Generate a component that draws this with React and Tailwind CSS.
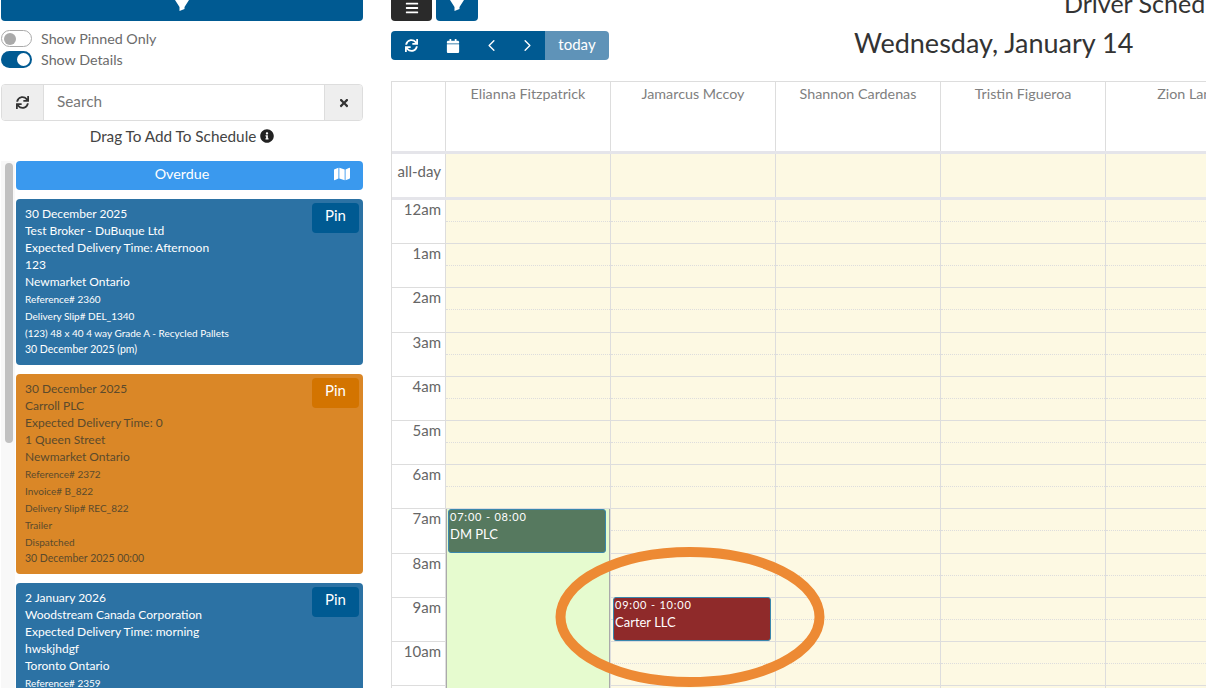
import { FaSync, FaCalendar, FaTimes, FaInfoCircle, FaMap, FaBars } from 'react-icons/fa'
import { ChevronLeft, ChevronRight } from 'lucide-react'

const days = ['Elianna Fitzpatrick', 'Jamarcus Mccoy', 'Shannon Cardenas', 'Tristin Figueroa', 'Zion Lane']
const hours = ['12am', '1am', '2am', '3am', '4am', '5am', '6am', '7am', '8am', '9am', '10am', '11am']

const cards = [
  {
    tone: 'blue',
    big: ['30 December 2025', 'Test Broker - DuBuque Ltd', 'Expected Delivery Time: Afternoon', '123', 'Newmarket Ontario'],
    small: ['Reference# 2360', 'Delivery Slip# DEL_1340', '(123) 48 x 40 4 way Grade A - Recycled Pallets'],
    foot: '30 December 2025 (pm)',
  },
  {
    tone: 'orange',
    big: ['30 December 2025', 'Carroll PLC', 'Expected Delivery Time: 0', '1 Queen Street', 'Newmarket Ontario'],
    small: ['Reference# 2372', 'Invoice# B_822', 'Delivery Slip# REC_822', 'Trailer', 'Dispatched'],
    foot: '30 December 2025 00:00',
  },
  {
    tone: 'blue',
    big: ['2 January 2026', 'Woodstream Canada Corporation', 'Expected Delivery Time: morning', 'hwskjhdgf', 'Toronto Ontario'],
    small: ['Reference# 2359', 'Delivery Slip# DEL_1339'],
  },
]

// bottom of the funnel, the top of it is scrolled off the page
const FunnelTip = () => (
  <svg width="20" height="11" viewBox="0 0 20 11" className="shrink-0 fill-white">
    <polygon points="3,0 17,0 12.5,7 12.5,9 7.5,11 7.5,7" />
  </svg>
)

const Toggle = ({ on, label }) => (
  <div className="flex items-center gap-[9px] h-[21px]">
    {on ? (
      <div className="w-[31px] h-[17px] rounded-full bg-[#005a92] flex items-center justify-end pr-[2px]">
        <div className="w-[13px] h-[13px] rounded-full bg-white" />
      </div>
    ) : (
      <div className="w-[31px] h-[17px] rounded-full border border-[#aaa] bg-white flex items-center pl-[2px]">
        <div className="w-[12px] h-[12px] rounded-full bg-[#aaa]" />
      </div>
    )}
    <span className="text-[14.3px] text-[#6b6b6b]">{label}</span>
  </div>
)

const Card = ({ card }) => {
  const orange = card.tone === 'orange'
  return (
    <div className={`relative rounded-[4px] px-[9px] pt-[6px] pb-[8px] ${orange ? 'bg-[#da8727] text-[#5b4a2c]' : 'bg-[#2c72a4] text-white'}`}>
      <button className={`absolute top-[4px] right-[4px] w-[47px] h-[30px] rounded-[4px] pb-[5px] text-[15px] text-white ${orange ? 'bg-[#d37400]' : 'bg-[#005a92]'}`}>
        Pin
      </button>
      {card.big.map((t) => (
        <div key={t} className="text-[12px] leading-[17px]">{t}</div>
      ))}
      <div className="h-[1px]" />
      {card.small.map((t) => (
        <div key={t} className="text-[10px] leading-[17px]">{t}</div>
      ))}
      {card.foot && <div className="text-[10.5px] leading-[15px]">{card.foot}</div>}
    </div>
  )
}

const Sidebar = () => (
  <div className="w-[363px] shrink-0 pl-[1px] flex flex-col">
    <div className="h-[21px] bg-[#005a92] rounded-b-[4px] flex items-start justify-center overflow-hidden">
      <FunnelTip />
    </div>
    <div className="mt-[7px]">
      <Toggle label="Show Pinned Only" />
      <Toggle on label="Show Details" />
    </div>
    <div className="mt-[14px] h-[37px] flex border border-[#ddd] rounded-[4px] overflow-hidden">
      <div className="w-[42px] bg-[#eee] border-r border-[#ddd] flex items-center justify-center text-[#333]">
        <FaSync className="text-[13px]" />
      </div>
      <div className="flex-1 pl-[13px] pb-[3px] flex items-center text-[15.3px] text-[#777]">Search</div>
      <div className="w-[38px] bg-[#eee] border-l border-[#ddd] flex items-center justify-center text-[#333]">
        <FaTimes className="text-[12px]" />
      </div>
    </div>
    <div className="mt-[5px] h-[20px] flex items-center justify-center gap-[4px] text-[15.3px] text-[#444]">
      Drag To Add To Schedule
      <FaInfoCircle className="text-[14px] text-[#222]" />
    </div>
    <div className="mt-[15px] flex flex-1 min-h-0">
      <div className="w-[14px] mr-[1px] shrink-0 bg-[#f8f8f8] pl-[4px] pt-[2px]">
        <div className="w-[8px] h-[280px] rounded-full bg-[#c1c1c1]" />
      </div>
      <div className="flex-1 flex flex-col gap-[9px]">
        <div className="h-[29px] shrink-0 rounded-[4px] bg-[#3a99ee] text-white text-[14.3px] pr-[15px] pb-[4px] flex items-center justify-center relative">
          Overdue
          <FaMap className="absolute right-[13px] top-[5px] text-[16px]" />
        </div>
        {cards.map((c, i) => (
          <Card key={i} card={c} />
        ))}
      </div>
    </div>
  </div>
)

const Toolbar = () => (
  <div className="h-[81px] relative">
    <div className="flex gap-[4px]">
      <div className="w-[41px] h-[21px] bg-[#2a2a2a] rounded-b-[4px] flex items-end justify-center pb-[6px] text-white overflow-hidden">
        <FaBars className="text-[14px]" />
      </div>
      <div className="w-[42px] h-[21px] bg-[#005a92] rounded-b-[4px] flex items-start justify-center overflow-hidden">
        <FunnelTip />
      </div>
    </div>
    <div className="mt-[10px] flex items-center">
      <div className="w-[154px] h-[29px] bg-[#005a92] rounded-l-[4px] text-white flex items-center">
        <div className="w-[41px] flex justify-center"><FaSync className="text-[13px]" /></div>
        <div className="w-[41px] flex justify-center"><FaCalendar className="text-[14px]" /></div>
        <div className="w-[36px] flex justify-center"><ChevronLeft size={19} strokeWidth={1.75} /></div>
        <div className="w-[36px] flex justify-center"><ChevronRight size={19} strokeWidth={1.75} /></div>
      </div>
      <div className="w-[64px] h-[29px] bg-[#5f93b8] rounded-r-[4px] text-white text-[15px] pb-[2px] flex items-center justify-center">today</div>
    </div>
    <div className="absolute left-[673px] top-[-13px] text-[25px] leading-[32px] text-[#333] whitespace-nowrap">Driver Schedule</div>
    <div className="absolute left-[463px] top-[26px] text-[27px] leading-[34px] text-[#333] whitespace-nowrap">Wednesday, January 14</div>
  </div>
)

const Event = ({ color, top, time, title }) => (
  <div className={`absolute ${top} left-[2px] w-[158px] h-[44px] ${color} border border-[#3a87ad] rounded-[3px] px-[1px] text-white`}>
    <div className="text-[11px] leading-[14px] tracking-[0.8px]">{time}</div>
    <div className="mt-[1px] text-[13px] leading-[18px]">{title}</div>
  </div>
)

const Calendar = () => (
  <div className="w-[1000px] border-t border-l border-[#ddd]">
    <div className="flex h-[69px]">
      <div className="w-[54px] shrink-0 border-r border-[#ddd]" />
      {days.map((d) => (
        <div key={d} className="w-[165px] shrink-0 border-r border-[#ddd] text-center text-[14.3px] leading-[24px] text-[#808080]">{d}</div>
      ))}
    </div>
    <div className="h-[3px] bg-[#e5e5ea]" />
    <div className="flex h-[43px]">
      <div className="w-[54px] shrink-0 border-r border-[#ddd] flex items-center justify-end pr-[4px] pb-[8px] text-[15px] text-[#666]">all-day</div>
      {days.map((d) => (
        <div key={d} className="w-[165px] shrink-0 border-r border-[#ddd] bg-[#fdf9e3]" />
      ))}
    </div>
    <div className="h-[3px] bg-[#e5e5ea]" />
    <div className="flex">
      <div className="w-[54px] shrink-0 border-r border-[#ddd]">
        {hours.map((h) => (
          <div key={h} className="h-[44.2px] border-b border-[#ddd] text-right pr-[4px] text-[15px] leading-[19px] text-[#666]">{h}</div>
        ))}
      </div>
      {days.map((d, i) => (
        <div key={d} className="w-[165px] shrink-0 border-r border-[#ddd] relative bg-[#fdf9e3]">
          {hours.map((h) => (
            <div key={h} className="h-[44.2px] border-b border-[#ddd]">
              <div className="h-[22.1px] border-b border-dotted border-[#ddd]" />
            </div>
          ))}
          {i === 0 && (
            <>
              <div className="absolute left-0 right-0 top-[309px] bottom-0 bg-[#e6fbcf] border-x border-[#aaa]" />
              <Event color="bg-[#56795f]" top="top-[309px]" time="07:00 - 08:00" title="DM PLC" />
            </>
          )}
          {i === 1 && <Event color="bg-[#8f2a2a]" top="top-[397px]" time="09:00 - 10:00" title="Carter LLC" />}
        </div>
      ))}
    </div>
  </div>
)

export default function App() {
  return (
    <div className="relative w-[1206px] h-[688px] overflow-hidden bg-white flex font-['Lato',sans-serif]">
      <Sidebar />
      <div className="ml-[28px] shrink-0">
        <Toolbar />
        <Calendar />
      </div>
      {/* hand drawn marker on the screenshot */}
      <svg className="absolute left-[550px] top-[540px] pointer-events-none" width="280" height="148" viewBox="0 0 280 148">
        <ellipse cx="140" cy="77" rx="129.5" ry="65" fill="none" stroke="#ed8a34" strokeWidth="10" />
      </svg>
    </div>
  )
}
